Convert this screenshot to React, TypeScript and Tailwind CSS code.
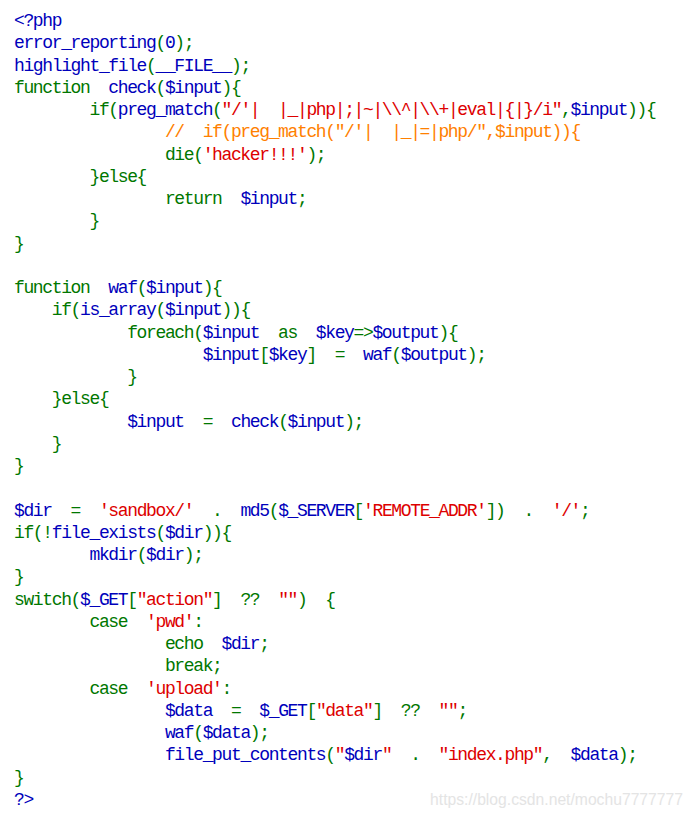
import React from 'react';

const B = 'text-[#0000BB]';
const G = 'text-[#007700]';
const R = 'text-[#DD0000]';
const O = 'text-[#FF8000]';

type Tok = [string, string];

const I4 = '    ';
const I8 = '        ';
const I12 = '            ';
const I16 = '                ';
const I20 = '                    ';

const lines: Tok[][] = [
    [[B, '<?php']],
    [[B, 'error_reporting'], [G, '('], [B, '0'], [G, ');']],
    [[B, 'highlight_file'], [G, '('], [B, '__FILE__'], [G, ');']],
    [[G, 'function  '], [B, 'check'], [G, '('], [B, '$input'], [G, '){']],
    [[G, I8 + 'if('], [B, 'preg_match'], [G, '('], [R, '"/\'|  |_|php|;|~|\\\\^|\\\\+|eval|{|}/i"'], [G, ','], [B, '$input'], [G, ')){']],
    [[O, I16 + '//  if(preg_match("/\'|  |_|=|php/",$input)){']],
    [[G, I16 + 'die('], [R, "'hacker!!!'"], [G, ');']],
    [[G, I8 + '}else{']],
    [[G, I16 + 'return  '], [B, '$input'], [G, ';']],
    [[G, I8 + '}']],
    [[G, '}']],
    [],
    [[G, 'function  '], [B, 'waf'], [G, '('], [B, '$input'], [G, '){']],
    [[G, I4 + 'if('], [B, 'is_array'], [G, '('], [B, '$input'], [G, ')){']],
    [[G, I12 + 'foreach('], [B, '$input'], [G, '  as  '], [B, '$key'], [G, '=>'], [B, '$output'], [G, '){']],
    [[G, I20], [B, '$input'], [G, '['], [B, '$key'], [G, ']  =  '], [B, 'waf'], [G, '('], [B, '$output'], [G, ');']],
    [[G, I12 + '}']],
    [[G, I4 + '}else{']],
    [[G, I12], [B, '$input'], [G, '  =  '], [B, 'check'], [G, '('], [B, '$input'], [G, ');']],
    [[G, I4 + '}']],
    [[G, '}']],
    [],
    [[B, '$dir'], [G, '  =  '], [R, "'sandbox/'"], [G, '  .  '], [B, 'md5'], [G, '('], [B, '$_SERVER'], [G, '['], [R, "'REMOTE_ADDR'"], [G, '])  .  '], [R, "'/'"], [G, ';']],
    [[G, 'if(!'], [B, 'file_exists'], [G, '('], [B, '$dir'], [G, ')){']],
    [[G, I8], [B, 'mkdir'], [G, '('], [B, '$dir'], [G, ');']],
    [[G, '}']],
    [[G, 'switch('], [B, '$_GET'], [G, '['], [R, '"action"'], [G, ']  ??  '], [R, '""'], [G, ')  {']],
    [[G, I8 + 'case  '], [R, "'pwd'"], [G, ':']],
    [[G, I16 + 'echo  '], [B, '$dir'], [G, ';']],
    [[G, I16 + 'break;']],
    [[G, I8 + 'case  '], [R, "'upload'"], [G, ':']],
    [[G, I16], [B, '$data'], [G, '  =  '], [B, '$_GET'], [G, '['], [R, '"data"'], [G, ']  ??  '], [R, '""'], [G, ';']],
    [[G, I16], [B, 'waf'], [G, '('], [B, '$data'], [G, ');']],
    [[G, I16], [B, 'file_put_contents'], [G, '('], [R, '"'], [B, '$dir'], [R, '"'], [G, '  .  '], [R, '"index.php"'], [G, ',  '], [B, '$data'], [G, ');']],
    [[G, '}']],
    [[B, '?>']],
];

export default function App() {
    return (
        <div className="relative w-[694px] h-[818px] bg-white overflow-hidden">
            {/* highlighted source */}
            <div className="pt-[10px] pl-[14px] font-['Liberation_Mono',monospace] text-[18px] tracking-[-1.37px]">
                {lines.map((line, i) => (
                    <div key={i} className="h-[22.26px] leading-[22.26px] whitespace-pre">
                        {line.map(([cls, text], j) => (
                            <span key={j} className={cls}>{text}</span>
                        ))}
                    </div>
                ))}
            </div>

            {/* watermark */}
            <div className="absolute right-[11px] bottom-[8px] font-['Liberation_Sans',Arial,sans-serif] text-[15.7px] leading-[20px] text-[#e4e4e4]">
                https://blog.csdn.net/mochu7777777
            </div>
        </div>
    );
}
